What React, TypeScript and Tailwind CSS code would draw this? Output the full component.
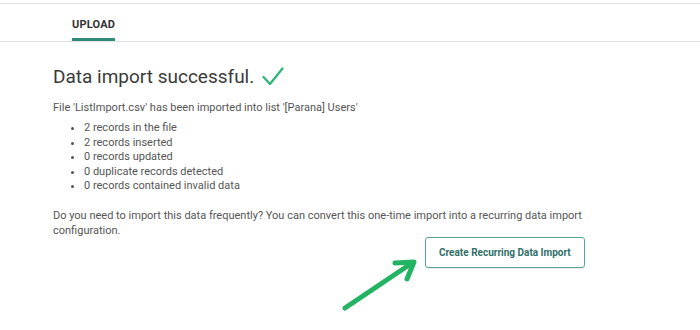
export default function App() {
  const stats = [
    "2 records in the file",
    "2 records inserted",
    "0 records updated",
    "0 duplicate records detected",
    "0 records contained invalid data",
  ];

  return (
    <div className="w-[700px] h-[330px] bg-white overflow-hidden font-['Roboto',sans-serif] text-[#555]">
      <div className="mt-[3px] border-t border-[#e2e2e2]" />

      {/* Tabs */}
      <div className="flex border-b border-[#e2e2e2] pl-[72px] h-[38px]">
        <div className="flex flex-col justify-end">
          <span className="text-[11px] font-bold tracking-[0.2px] text-[#333] pb-[5px]">UPLOAD</span>
          <div className="h-[3px] bg-[#2e8b7a]" />
        </div>
      </div>

      <div className="pl-[53px] pr-[60px]">
        <h1 className="flex items-center gap-[8px] mt-[22px] text-[19px] leading-[26px] text-[#3a3a3a]">
          Data import successful.
          <svg width="22" height="19" viewBox="0 0 22 19" fill="none" className="mb-[2px]">
            <path d="M1.5 10 L8 17 L20.5 1.5" stroke="#2bb673" strokeWidth="2.2" strokeLinecap="round" strokeLinejoin="round" />
          </svg>
        </h1>

        <div className="text-[11px]">
          <p className="mt-[10px] leading-[15px]">
            File 'ListImport.csv' has been imported into list '[Parana] Users'
          </p>

          <ul className="mt-[6px] pl-[31px] list-disc leading-[14.5px]">
            {stats.map((s) => (
              <li key={s}>{s}</li>
            ))}
          </ul>

          <p className="mt-[14px] leading-[15px] max-w-[540px]">
            Do you need to import this data frequently? You can convert this one-time import into a recurring data import
            configuration.
          </p>
        </div>

        <div className="flex pl-[372px] relative -mt-[1px]">
          <button className="h-[31px] px-[13px] border border-[#5aa396] rounded-[3px] text-[10px] font-bold text-[#2f6f68] shadow-[0_1px_1px_rgba(0,0,0,0.08)]">
            Create Recurring Data Import
          </button>
          <svg
            width="80"
            height="60"
            viewBox="0 0 80 60"
            className="absolute left-[286px] top-[17px]"
          >
            <path d="M6 54 L70 11" stroke="#23b463" strokeWidth="5" strokeLinecap="round" />
            <path d="M56 9 L75 8 L68 25" stroke="#23b463" strokeWidth="5" strokeLinecap="round" strokeLinejoin="round" fill="none" />
          </svg>
        </div>
      </div>
    </div>
  );
}
